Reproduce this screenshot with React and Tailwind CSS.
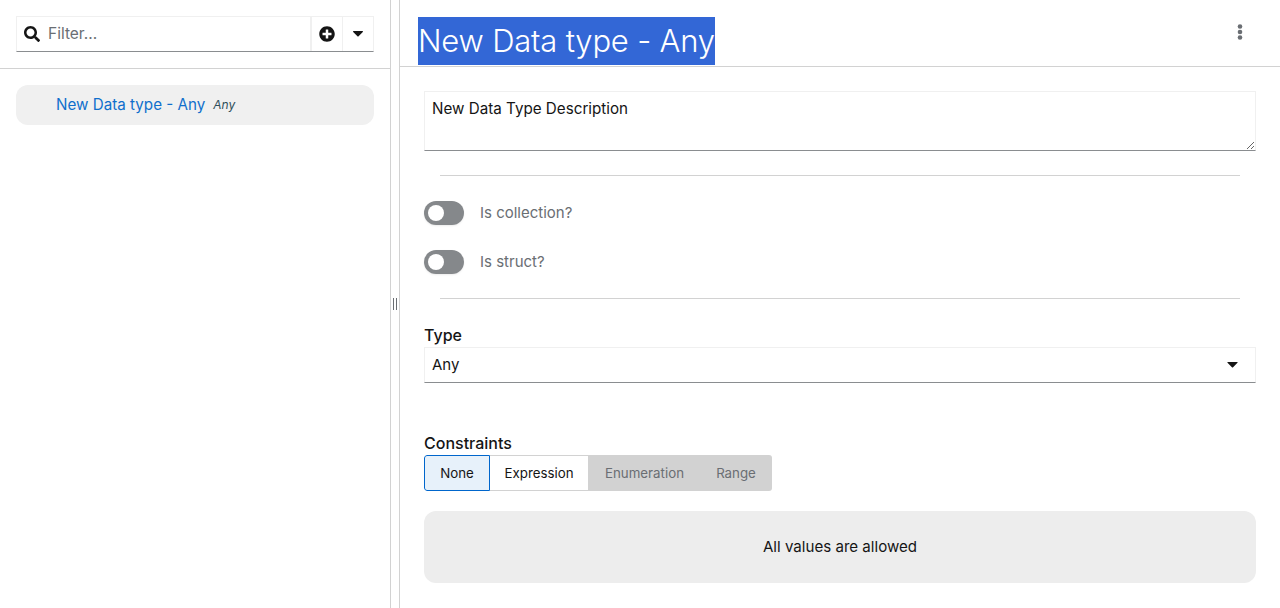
import React from 'react'

const Caret = ({ className = '' }) => (
  <svg viewBox="0 0 12 7" className={className} fill="currentColor">
    <path d="M0.6 0h10.8c.5 0 .8.6.4 1L6.4 6.4c-.2.2-.6.2-.8 0L.2 1C-.2.6.1 0 .6 0z" />
  </svg>
)

const Toggle = ({ label }) => (
  <div className="flex items-center h-6 gap-4">
    <div className="w-10 h-6 rounded-full bg-[#85888b] flex items-center pl-1 shadow-[0_1px_2px_rgba(0,0,0,0.08)]">
      <div className="w-4 h-4 rounded-full bg-white" />
    </div>
    <span className="text-[15px] leading-6 text-[#6a6e73]">{label}</span>
  </div>
)

const App = () => {
  return (
    <div className="flex w-[1280px] h-[608px] bg-white text-[#151515] overflow-hidden font-['Inter',sans-serif]">
      {/* Left panel */}
      <div className="w-[391px] shrink-0 border-r border-[#d2d2d2]">
        <div className="h-[69px] border-b border-[#d2d2d2] p-4">
          <div className="flex h-9 border border-[#f0f0f0] border-b-[#8a8d90]">
            <div className="flex-1 flex items-center pl-[7px] gap-2">
              <svg viewBox="0 0 512 512" className="w-4 h-4" fill="#151515">
                <path d="M505 442.7L405.3 343c-4.5-4.5-10.6-7-17-7H372c27.6-35.3 44-79.7 44-128C416 93.1 322.9 0 208 0S0 93.1 0 208s93.1 208 208 208c48.3 0 92.7-16.4 128-44v16.3c0 6.4 2.5 12.5 7 17l99.7 99.7c9.4 9.4 24.6 9.4 33.9 0l28.3-28.3c9.4-9.4 9.4-24.6.1-34zM208 336c-70.7 0-128-57.2-128-128 0-70.7 57.2-128 128-128 70.7 0 128 57.2 128 128 0 70.7-57.2 128-128 128z" />
              </svg>
              <span className="text-[15.5px] text-[#6a6e73]">Filter...</span>
            </div>
            <div className="w-8 flex items-center justify-center border-l-2 border-[#f0f0f0]">
              <svg viewBox="0 0 512 512" className="w-4 h-4" fill="#151515">
                <path d="M256 8C119 8 8 119 8 256s111 248 248 248 248-111 248-248S393 8 256 8zm144 276c0 6.6-5.4 12-12 12h-92v92c0 6.6-5.4 12-12 12h-56c-6.6 0-12-5.4-12-12v-92h-92c-6.6 0-12-5.4-12-12v-56c0-6.6 5.4-12 12-12h92v-92c0-6.6 5.4-12 12-12h56c6.6 0 12 5.4 12 12v92h92c6.6 0 12 5.4 12 12v56z" />
              </svg>
            </div>
            <div className="w-[31px] flex items-center justify-center border-l border-[#f0f0f0]">
              <Caret className="w-[10px] h-[6px]" />
            </div>
          </div>
        </div>
        <div className="p-4">
          <div className="h-10 rounded-xl bg-[#f0f0f0] flex items-center pl-10 gap-2">
            <span className="text-[15.2px] text-[#0f6fcc]">New Data type - Any</span>
            <span className="text-[12px] italic text-[#2f4f5a]">Any</span>
          </div>
        </div>
      </div>

      {/* Divider */}
      <div className="w-2 shrink-0 flex items-center justify-center">
        <div className="w-1 h-3 border-x border-[#6a6e73]" />
      </div>

      {/* Right panel */}
      <div className="flex-1 border-l border-[#d2d2d2]">
        <div className="h-[67px] border-b border-[#d2d2d2] pl-[18px] pr-[36px] pt-[17px] flex items-start justify-between">
          <span className="h-12 flex items-center bg-[#3367d6] text-white text-[31px] tracking-[-0.2px] font-light whitespace-nowrap">New Data type - Any</span>
          <svg viewBox="0 0 8 16" className="w-2 h-4 mt-[7px]" fill="#6a6e73">
            <circle cx="4" cy="2.5" r="2.3" />
            <circle cx="4" cy="8" r="2.3" />
            <circle cx="4" cy="13.5" r="2.3" />
          </svg>
        </div>
        <div className="px-6 pt-6">
          <textarea
            defaultValue="New Data Type Description"
            className="block w-full h-[60px] pl-[7px] pr-2 py-[5px] text-[15.2px] leading-6 text-[#151515] border border-[#f0f0f0] border-b-[#8a8d90] outline-none"
          />
          <div className="mx-4 mt-6 border-t border-[#d2d2d2]" />
          <div className="mt-[25px] flex flex-col gap-[25px]">
            <Toggle label="Is collection?" />
            <Toggle label="Is struct?" />
          </div>
          <div className="mx-4 mt-6 border-t border-[#d2d2d2]" />
          <div className="mt-6 text-[16px] leading-6 font-medium">Type</div>
          <div className="h-9 flex items-center justify-between pl-[7px] pr-2 border border-[#f0f0f0] border-b-[#8a8d90] text-[15px]">
            <span>Any</span>
            <Caret className="w-[11px] h-[6px] mr-[9px]" />
          </div>
          <div className="mt-12 text-[16px] leading-6 font-medium">Constraints</div>
          <div className="flex w-[348px] h-9 text-[13.3px] rounded-[3px] overflow-hidden">
            <div className="w-[66px] pt-px flex items-center justify-center bg-[#e7f1fa] border border-[#06c] rounded-l-[3px]">None</div>
            <div className="w-[99px] pt-px flex items-center justify-center border-y border-r border-[#d2d2d2]">Expression</div>
            <div className="w-[111px] pt-px flex items-center justify-center bg-[#d2d2d2] text-[#6a6e73]">Enumeration</div>
            <div className="flex-1 pt-px flex items-center justify-center bg-[#d2d2d2] text-[#6a6e73]">Range</div>
          </div>
          <div className="mt-5 h-[72px] rounded-xl bg-[#ededed] flex items-center justify-center text-[15.1px]">
            All values are allowed
          </div>
        </div>
      </div>
    </div>
  )
}

export default App
